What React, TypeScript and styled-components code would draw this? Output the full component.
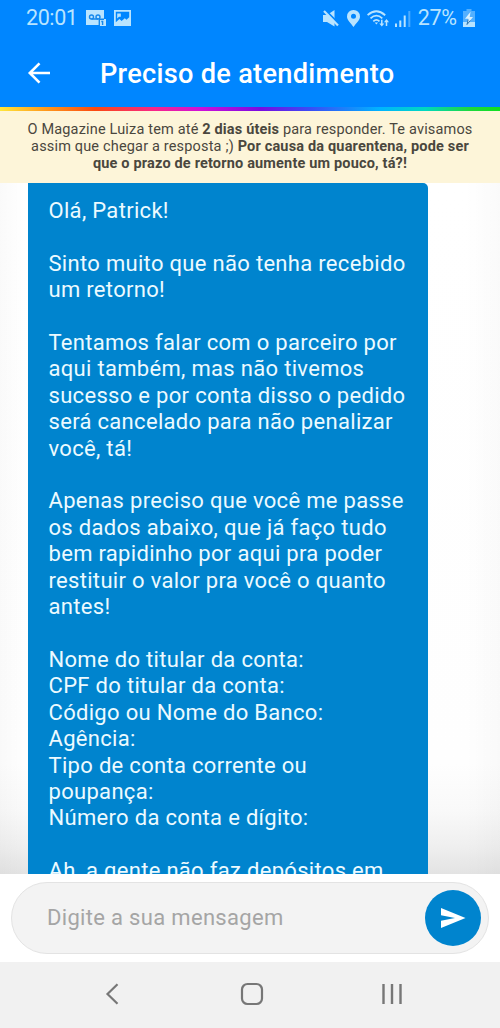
import { Fragment } from "react";
import styled, { createGlobalStyle } from "styled-components";

type LineProps = {
  $spacing?: number;
};

const GlobalStyle = createGlobalStyle`
  * {
    box-sizing: border-box;
  }
  body {
    margin: 0;
    font-family: Roboto, "Liberation Sans", sans-serif;
  }
`;

const Screen = styled.div`
  width: 500px;
  height: 1028px;
  display: flex;
  flex-direction: column;
  overflow: hidden;
  background-color: #fff;
`;

const StatusBar = styled.div`
  height: 36px;
  flex: none;
  display: flex;
  align-items: center;
  justify-content: space-between;
  padding: 0 25px 0 26px;
  background-color: #0086ff;
  color: #b9e4ff;
`;

const StatusGroup = styled.div<{ $gap: number }>`
  display: flex;
  align-items: center;
  gap: ${(props) => props.$gap}px;
`;

const StatusText = styled.span<LineProps>`
  font-size: 21.5px;
  line-height: 36px;
  letter-spacing: ${(props) => props.$spacing ?? 0}px;
`;

const Header = styled.header`
  height: 71px;
  flex: none;
  display: flex;
  align-items: center;
  padding: 4px 26px 0;
  background-color: #0086ff;
  color: #fff;
`;

const BackButton = styled.button`
  width: 26px;
  height: 26px;
  padding: 0;
  border: none;
  background: none;
  color: inherit;
  display: flex;
  margin: -2px 48px 0 0;
`;

const Title = styled.h1`
  margin: 0;
  font-size: 27.2px;
  font-weight: 500;
  line-height: 36px;
  letter-spacing: 0.27px;
  white-space: nowrap;
`;

const Rainbow = styled.div`
  height: 4px;
  flex: none;
  background: linear-gradient(
    90deg,
    #ffe63c 0%,
    #ff9a1c 9%,
    #fb4a10 19%,
    #f8258a 31%,
    #d010d8 40%,
    #7a0be0 52%,
    #3a4cf5 62%,
    #00b4ff 76%,
    #00d8c0 85%,
    #1fd83c 94%,
    #10e020 100%
  );
`;

const Notice = styled.div`
  height: 72px;
  flex: none;
  padding-top: 11.4px;
  background-color: #fdf5d9;
  color: #4a473e;
  font-size: 14.5px;
  line-height: 16.7px;
  text-align: center;
`;

const NoticeLine = styled.div<LineProps>`
  white-space: pre;
  letter-spacing: ${(props) => props.$spacing ?? 0}px;
`;

const Chat = styled.main`
  height: 691px;
  flex: none;
  overflow: hidden;
  padding-left: 28px;
  background:
    linear-gradient(
      90deg,
      rgba(0, 0, 0, 0.02),
      transparent 5%,
      transparent 93%,
      rgba(0, 0, 0, 0.02)
    ),
    linear-gradient(
      180deg,
      #fff 0%,
      #fefefe 84%,
      #f9f9f9 91%,
      #efefef 96%,
      #e3e3e3 100%
    );
`;

const Bubble = styled.div`
  width: 400px;
  height: 760px;
  padding: 15px 20.5px;
  border-radius: 0 5px 0 0;
  background-color: #0084ce;
  color: #ecfaff;
  font-size: 22px;
  line-height: 26.4px;
  letter-spacing: 0.31px;
  white-space: pre;
`;

const Composer = styled.div`
  height: 88px;
  flex: none;
  padding: 8px 11px;
  background-color: #fff;
`;

const Field = styled.div`
  height: 72px;
  display: flex;
  align-items: center;
  justify-content: space-between;
  padding: 0 7px 0 35px;
  border: 1px solid #e3e3e3;
  border-radius: 36px;
  background-color: #f3f3f3;
`;

const Placeholder = styled.span`
  margin-top: -2px;
  color: #a5a5a5;
  font-size: 22px;
  letter-spacing: 0.32px;
`;

const SendButton = styled.button`
  width: 56px;
  height: 56px;
  padding: 0;
  border: none;
  border-radius: 50%;
  display: flex;
  align-items: center;
  justify-content: center;
  background-color: #0084ce;
`;

const NavBar = styled.nav`
  flex: 1;
  display: flex;
  align-items: center;
  justify-content: space-between;
  padding: 0 97px 3px 101px;
  background-color: #f1f1f1;
`;

const message = [
  "Olá, Patrick!",
  "",
  "Sinto muito que não tenha recebido",
  "um retorno!",
  "",
  "Tentamos falar com o parceiro por",
  "aqui também, mas não tivemos",
  "sucesso e por conta disso o pedido",
  "será cancelado para não penalizar",
  "você, tá!",
  "",
  "Apenas preciso que você me passe",
  "os dados abaixo, que já faço tudo",
  "bem rapidinho por aqui pra poder",
  "restituir o valor pra você o quanto",
  "antes!",
  "",
  "Nome do titular da conta:",
  "CPF do titular da conta:",
  "Código ou Nome do Banco:",
  "Agência:",
  "Tipo de conta corrente ou",
  "poupança:",
  "Número da conta e dígito:",
  "",
  "Ah, a gente não faz depósitos em",
];

const VoicemailIcon = () => (
  <svg width="20" height="17" viewBox="0 0 20 17">
    <path d="M0 0h18v9h2v7h-6v-1H0z" fill="#b9e4ff" />
    <g fill="none" stroke="#1688ec" strokeWidth="1.4">
      <circle cx="5.5" cy="7" r="2" />
      <circle cx="12" cy="7" r="2" />
      <path d="M5.5 9H12M13.3 15.5V9.3H18" />
      <path d="M15.3 11.5h1.3v3.5" />
    </g>
  </svg>
);

const PictureIcon = () => (
  <svg width="17" height="16" viewBox="0 0 17 16">
    <path
      fillRule="evenodd"
      d="M0 0h17v16H0zM1.8 1.8v10.4L5.4 9l2.2 2 3.2-2.8 1.7 1.6 2.7-2.6V1.8z"
      fill="#b9e4ff"
    />
    <path d="M3.2 3.4h3.6v3.4H5L3.2 8.6z" fill="#b9e4ff" />
  </svg>
);

const MutedIcon = () => (
  <svg width="16" height="17" viewBox="0 0 16 17">
    <path d="M0 5h4l7.5-5v16.5L4 12H0z" fill="#b9e4ff" />
    <path d="M2.2 0L17 15" stroke="#0086ff" strokeWidth="2" />
    <path d="M1 1l14 14.5" stroke="#b9e4ff" strokeWidth="2.2" />
  </svg>
);

const PinIcon = () => (
  <svg width="13" height="17" viewBox="0 0 13 17">
    <path
      fillRule="evenodd"
      d="M6.5 0A6.4 6.4 0 0 0 0 6.4C0 10.5 4 13 6.5 17 9 13 13 10.5 13 6.4A6.4 6.4 0 0 0 6.5 0zm0 3.8a2.5 2.5 0 1 1 0 5 2.5 2.5 0 0 1 0-5z"
      fill="#b9e4ff"
    />
  </svg>
);

const WifiIcon = () => (
  <svg width="22" height="17" viewBox="0 0 22 17">
    <g fill="none" stroke="#b9e4ff" strokeWidth="1.8">
      <path d="M.6 5.2q8.6-7.8 17.6 0M3.5 8.3q5.9-5.4 11.8 0M6.3 11.3q3.1-2.8 6.2 0" />
      <path d="M14.8 9.8v5M19.5 16v-5" strokeWidth="1.5" />
    </g>
    <path
      d="M12.3 13.4h5l-2.5 3.2zM17 12.2h5L19.5 9zM7.7 12.5h3.4l-1.7 2z"
      fill="#b9e4ff"
    />
  </svg>
);

const SignalIcon = () => (
  <svg width="16" height="17" viewBox="0 0 16 17">
    <path
      d="M0 13.5h2V17H0zM4.3 10.5h2V17h-2zM8.7 5.5h2V17h-2z"
      fill="#b9e4ff"
    />
    <path d="M13.3 1h2v16h-2z" fill="#b9e4ff" opacity=".4" />
  </svg>
);

const BatteryIcon = () => (
  <svg width="12" height="18" viewBox="0 0 12 18">
    <path d="M3.5 0h5v2H12v16H0V2h3.5z" fill="#b9e4ff" opacity=".45" />
    <path d="M0 13h12v5H0z" fill="#b9e4ff" />
    <path d="M7.6 2.8L2 9.8h3.3L4 15.5l6-7.4H6.7z" fill="#d9f1ff" />
    <path
      d="M5.2 10.6L4 15.5l3.3-4"
      fill="none"
      stroke="#236aa8"
      strokeWidth=".9"
    />
  </svg>
);

const App = () => {
  return (
    <>
      <GlobalStyle />
      <Screen>
        <StatusBar>
          <StatusGroup $gap={8}>
            <StatusText $spacing={-0.4}>20:01</StatusText>
            <StatusGroup $gap={8}>
              <VoicemailIcon />
              <PictureIcon />
            </StatusGroup>
          </StatusGroup>
          <StatusGroup $gap={6.5}>
            <StatusGroup $gap={8}>
              <MutedIcon />
              <PinIcon />
            </StatusGroup>
            <WifiIcon />
            <SignalIcon />
            <StatusText $spacing={-0.4}>27%</StatusText>
            <BatteryIcon />
          </StatusGroup>
        </StatusBar>
        <Header>
          <BackButton type="button" aria-label="Voltar">
            <svg width="26" height="26" viewBox="0 0 26 26">
              <path
                d="M24 13H3.5M13.5 3.3L3.8 13l9.7 9.7"
                fill="none"
                stroke="#fff"
                strokeWidth="2.6"
              />
            </svg>
          </BackButton>
          <Title>Preciso de atendimento</Title>
        </Header>
        <Rainbow />
        <Notice>
          <NoticeLine $spacing={0.17}>
            O Magazine Luiza tem até <b>2 dias úteis</b> para responder. Te
            avisamos
          </NoticeLine>
          <NoticeLine $spacing={0.17}>
            assim que chegar a resposta ;){" "}
            <b>Por causa da quarentena, pode ser</b>
          </NoticeLine>
          <NoticeLine $spacing={0.17}>
            <b>que o prazo de retorno aumente um pouco, tá?!</b>
          </NoticeLine>
        </Notice>
        <Chat>
          <Bubble>
            {message.map((line, index) => (
              <Fragment key={index}>
                {line}
                <br />
              </Fragment>
            ))}
          </Bubble>
        </Chat>
        <Composer>
          <Field>
            <Placeholder>Digite a sua mensagem</Placeholder>
            <SendButton type="button" aria-label="Enviar">
              <svg width="26" height="22" viewBox="0 0 26 22">
                <path d="M1 1l24.5 10L1 21v-7.2L15 11 1 8.2z" fill="#fff" />
              </svg>
            </SendButton>
          </Field>
        </Composer>
        <NavBar>
          <svg width="22" height="24" viewBox="0 0 22 24">
            <path
              d="M16.5 2.2L6.5 12l10 9.8"
              fill="none"
              stroke="#777"
              strokeWidth="2.2"
            />
          </svg>
          <svg width="24" height="24" viewBox="0 0 24 24">
            <rect
              x="2"
              y="2"
              width="20"
              height="20"
              rx="5.5"
              fill="none"
              stroke="#777"
              strokeWidth="2.2"
            />
          </svg>
          <svg width="22" height="24" viewBox="0 0 22 24">
            <path
              d="M2.5 2v20M11 2v20M19.5 2v20"
              stroke="#777"
              strokeWidth="2.4"
            />
          </svg>
        </NavBar>
      </Screen>
    </>
  );
};

export default App;
